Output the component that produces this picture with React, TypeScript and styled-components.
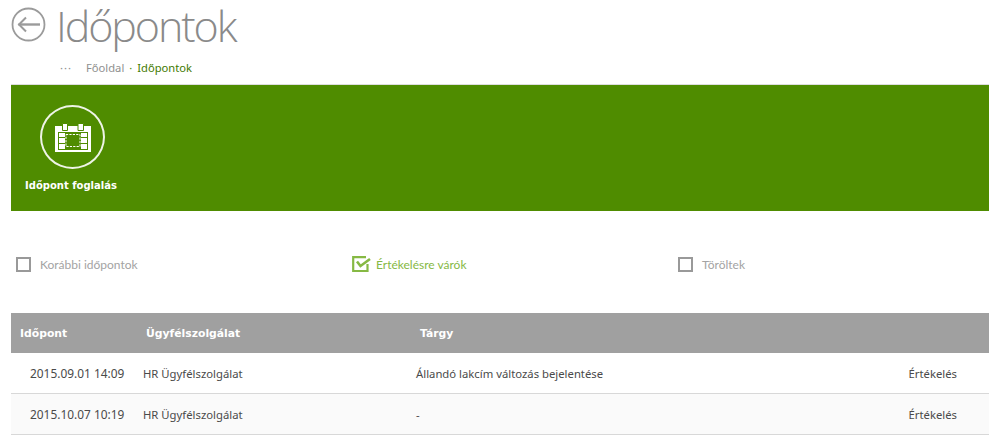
import React from 'react';
import styled, { createGlobalStyle } from 'styled-components';

const GlobalStyle = createGlobalStyle`
  html, body {
    margin: 0;
    padding: 0;
    background: #ffffff;
    font-family: "Noto Sans", "Liberation Sans", sans-serif;
  }
`;

const Page = styled.div`
  width: 1000px;
  height: 444px;
  padding: 0 11px;
  box-sizing: border-box;
  overflow: hidden;
`;

const TitleRow = styled.div`
  display: flex;
  align-items: center;
  gap: 10px;
  height: 56px;
`;

const BackIcon = styled.svg`
  display: block;
  width: 35px;
  height: 35px;
  margin-top: -7px;
`;

const PageTitle = styled.h1`
  margin: 0 0 5px;
  font-family: "Open Sans", sans-serif;
  font-size: 43px;
  line-height: 46px;
  font-weight: 300;
  letter-spacing: -2.1px;
  color: #8a8a8a;
`;

const Breadcrumb = styled.div`
  display: flex;
  align-items: center;
  height: 29px;
  padding: 0 0 6px 49px;
  box-sizing: border-box;
  font-size: 11.2px;
  color: #8f8f8f;
`;

const Dots = styled.span`
  width: 26px;
  letter-spacing: 1px;
`;

const CrumbSeparator = styled.span`
  margin: 0 5px;
  color: #4f8c00;
`;

const CurrentCrumb = styled.span`
  color: #3f7a00;
`;

const Banner = styled.div`
  height: 126px;
  background: #4f8c00;
  box-shadow: 0 -1px 0 #dddddd;
`;

const BannerAction = styled.div`
  display: flex;
  flex-direction: column;
  align-items: center;
  width: 123px;
  padding-top: 20px;
`;

const ActionCircle = styled.div`
  display: flex;
  align-items: center;
  justify-content: center;
  width: 61px;
  height: 60px;
  border: 2px solid #eef4e6;
  border-radius: 50%;
`;

const ActionLabel = styled.div`
  margin: 11px 3px 0 0;
  font-family: "DejaVu Sans", sans-serif;
  font-size: 10px;
  font-weight: 700;
  color: #ffffff;
  white-space: nowrap;
`;

const Filters = styled.div`
  display: grid;
  grid-template-columns: 336px 326px 1fr;
  align-items: center;
  height: 102px;
  padding: 4px 0 0 5px;
  box-sizing: border-box;
`;

const Filter = styled.div<{ $active?: boolean }>`
  display: flex;
  align-items: center;
  gap: ${(p) => (p.$active ? '5px' : '9px')};
  font-family: Lato, sans-serif;
  font-size: 12px;
  color: ${(p) => (p.$active ? '#86b944' : '#a3a3a3')};
`;

const CheckBox = styled.span`
  display: block;
  width: 15px;
  height: 15px;
  box-sizing: border-box;
  border: 2px solid #999999;
`;

const CheckedIcon = styled.svg`
  display: block;
  width: 19px;
  height: 16px;
`;

const Table = styled.table`
  width: 100%;
  border-collapse: collapse;
  table-layout: fixed;
`;

const HeadCell = styled.th<{ $pad: number }>`
  height: 40px;
  padding: 0 0 0 ${(p) => p.$pad}px;
  box-sizing: border-box;
  background: #a0a0a0;
  font-family: "DejaVu Sans", sans-serif;
  font-size: 10.8px;
  font-weight: 700;
  color: #ffffff;
  text-align: left;
`;

const Row = styled.tr<{ $alt?: boolean }>`
  background: ${(p) => (p.$alt ? '#fafafa' : '#ffffff')};
  border-bottom: 1px solid #d8d8d8;
`;

const Cell = styled.td<{ $pad?: number; $right?: boolean }>`
  height: 40px;
  padding: 0 ${(p) => (p.$right ? '32px' : '0')} 0 ${(p) => p.$pad ?? 0}px;
  font-family: "Noto Sans", sans-serif;
  font-size: 11.3px;
  color: #4a4a4a;
  text-align: ${(p) => (p.$right ? 'right' : 'left')};
  white-space: nowrap;
`;

const DateCell = styled(Cell)`
  font-size: 11.9px;
`;

const rows = [
  { date: '2015.09.01 14:09', desk: 'HR Ügyfélszolgálat', subject: 'Állandó lakcím változás bejelentése' },
  { date: '2015.10.07 10:19', desk: 'HR Ügyfélszolgálat', subject: '-' }
];

const App: React.FC = () => (
  <Page>
    <GlobalStyle />
    <TitleRow>
      <BackIcon viewBox="0 0 35 35" fill="none" stroke="#9b9b9b">
        <circle cx="17.5" cy="17.5" r="16" strokeWidth="1.8" />
        <path d="M7.5 17.5h21.5" strokeWidth="2.4" />
        <path d="M15 10.5l-7 7 7 7" strokeWidth="2" />
      </BackIcon>
      <PageTitle>Időpontok</PageTitle>
    </TitleRow>

    <Breadcrumb>
      <Dots>···</Dots>
      <span>Főoldal</span>
      <CrumbSeparator>·</CrumbSeparator>
      <CurrentCrumb>Időpontok</CurrentCrumb>
    </Breadcrumb>

    <Banner>
      <BannerAction>
        <ActionCircle>
          <svg width="36" height="29" viewBox="0 0 36 29">
            <path fill="#ffffff" fillRule="evenodd" d="M0 3h36v26H0zM3 9v18h30V9z" />
            <path
              fill="#ffffff"
              stroke="#4f8c00"
              strokeWidth="1"
              d="M7.5 0.5h5v7h-5zM23 0.5h5.5v7H23z"
            />
            <path
              fill="#ffffff"
              d="M4 10h6v4H4zM4 15h6v5H4zM4 21h6v5H4zM26 10h6v4h-6zM26 15h6v5h-6zM26 21h6v5h-6z"
            />
            <rect x="11" y="11.5" width="14" height="12" fill="none" stroke="#ffffff" strokeDasharray="2.2 1.2" />
          </svg>
        </ActionCircle>
        <ActionLabel>Időpont foglalás</ActionLabel>
      </BannerAction>
    </Banner>

    <Filters>
      <Filter>
        <CheckBox />
        Korábbi időpontok
      </Filter>
      <Filter $active>
        <CheckedIcon viewBox="0 0 19 16" fill="none" stroke="#86b944" strokeWidth="2.2">
          <path d="M15.5 8v7H1.2V1.2h12.8" />
          <path d="M5 5.5l3.5 4.5 9.5-7" strokeWidth="2.6" />
        </CheckedIcon>
        Értékelésre várók
      </Filter>
      <Filter>
        <CheckBox />
        Töröltek
      </Filter>
    </Filters>

    <Table>
      <colgroup>
        <col width="124" />
        <col width="262" />
        <col width="460" />
        <col />
      </colgroup>
      <thead>
        <tr>
          <HeadCell $pad={9}>Időpont</HeadCell>
          <HeadCell $pad={11}>Ügyfélszolgálat</HeadCell>
          <HeadCell $pad={23}>Tárgy</HeadCell>
          <HeadCell $pad={0} />
        </tr>
      </thead>
      <tbody>
        {rows.map((row, i) => (
          <Row key={row.date} $alt={i % 2 === 1}>
            <DateCell $pad={19}>{row.date}</DateCell>
            <Cell $pad={8}>{row.desk}</Cell>
            <Cell $pad={19}>{row.subject}</Cell>
            <Cell $right>Értékelés</Cell>
          </Row>
        ))}
      </tbody>
    </Table>
  </Page>
);

export default App;
